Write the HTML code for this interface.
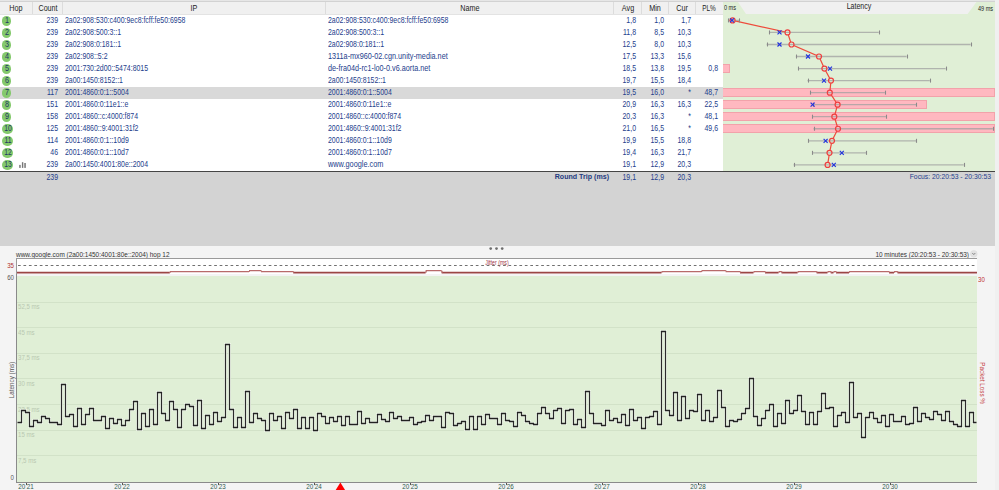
<!DOCTYPE html><html><head><meta charset="utf-8"><style>
html,body{margin:0;padding:0;}
body{width:999px;height:490px;position:relative;overflow:hidden;background:#f4f4f4;font-family:'Liberation Sans', sans-serif;}
.a{position:absolute;}
.tx{position:absolute;white-space:nowrap;color:#24408c;}
.hop{position:absolute;height:10px;border-radius:5px;background:#84c96c;}
</style></head><body>

<div class="a" style="left:995px;top:0;width:4px;height:490px;background:#f0f0f0"></div>
<div class="a" style="left:0;top:0;width:995px;height:1px;background:#e6e6e6"></div>
<div class="a" style="left:0;top:1px;width:995px;height:1px;background:#d2d2d2"></div>
<div class="a" style="left:0;top:2px;width:995px;height:12px;background:#f0f0f0"></div>
<div class="a" style="left:0;top:14px;width:723px;height:1px;background:#e3e3e3"></div>
<div class="a" style="left:0;top:15px;width:723px;height:156px;background:#fff"></div>
<div class="a" style="left:0;top:87px;width:723px;height:12px;background:#d9d9d9"></div>
<div class="a" style="left:32px;top:2px;width:1px;height:12px;background:#dcdcdc"></div>
<div class="a" style="left:62px;top:2px;width:1px;height:12px;background:#dcdcdc"></div>
<div class="a" style="left:325px;top:2px;width:1px;height:12px;background:#dcdcdc"></div>
<div class="a" style="left:613px;top:2px;width:1px;height:12px;background:#dcdcdc"></div>
<div class="a" style="left:641px;top:2px;width:1px;height:12px;background:#dcdcdc"></div>
<div class="a" style="left:668px;top:2px;width:1px;height:12px;background:#dcdcdc"></div>
<div class="a" style="left:695px;top:2px;width:1px;height:12px;background:#dcdcdc"></div>
<div class="tx" style="left:-184.0px;width:400px;text-align:center;transform-origin:50% 50%;top:1.6px;font-size:8.5px;line-height:12px;color:#1c1c1c;transform:scaleX(0.85);">Hop</div>
<div class="tx" style="left:-152.5px;width:400px;text-align:center;transform-origin:50% 50%;top:1.6px;font-size:8.5px;line-height:12px;color:#1c1c1c;transform:scaleX(0.84);">Count</div>
<div class="tx" style="left:-6.0px;width:400px;text-align:center;transform-origin:50% 50%;top:1.6px;font-size:8.5px;line-height:12px;color:#1c1c1c;transform:scaleX(0.85);">IP</div>
<div class="tx" style="left:269.5px;width:400px;text-align:center;transform-origin:50% 50%;top:1.6px;font-size:8.5px;line-height:12px;color:#1c1c1c;transform:scaleX(0.85);">Name</div>
<div class="tx" style="left:427.5px;width:400px;text-align:center;transform-origin:50% 50%;top:1.6px;font-size:8.5px;line-height:12px;color:#1c1c1c;transform:scaleX(0.85);">Avg</div>
<div class="tx" style="left:455.0px;width:400px;text-align:center;transform-origin:50% 50%;top:1.6px;font-size:8.5px;line-height:12px;color:#1c1c1c;transform:scaleX(0.85);">Min</div>
<div class="tx" style="left:482.0px;width:400px;text-align:center;transform-origin:50% 50%;top:1.6px;font-size:8.5px;line-height:12px;color:#1c1c1c;transform:scaleX(0.85);">Cur</div>
<div class="tx" style="left:509.0px;width:400px;text-align:center;transform-origin:50% 50%;top:1.6px;font-size:8.5px;line-height:12px;color:#1c1c1c;transform:scaleX(0.76);">PL%</div>
<div class="a" style="left:723px;top:2px;width:272px;height:169px;background:#e0efd6"></div>
<svg class="a" style="left:723px;top:0" width="272" height="16"><polygon points="15,2 253.5,2 244.6,14 23,14" fill="#f0f0f0"/></svg>
<div class="tx" style="left:724px;width:400px;text-align:left;transform-origin:0 50%;top:2px;font-size:7px;line-height:12px;color:#1c1c1c;transform:scaleX(0.79);">0 ms</div>
<div class="tx" style="left:659.2px;width:400px;text-align:center;transform-origin:50% 50%;top:0.2px;font-size:8.6px;line-height:12px;color:#1c1c1c;transform:scaleX(0.82);">Latency</div>
<div class="tx" style="left:592.8px;width:400px;text-align:right;transform-origin:100% 50%;top:3px;font-size:7px;line-height:12px;color:#1c1c1c;transform:scaleX(0.79);">49 ms</div>
<div class="hop" style="left:1.85px;top:15.9px;width:9.6px;height:9.9px"></div>
<div class="tx" style="left:-193.35px;width:400px;text-align:center;transform-origin:50% 50%;top:14.3px;font-size:8.5px;line-height:12px;color:#1f3566;transform:scaleX(0.85);">1</div>
<div class="tx" style="left:-342.2px;width:400px;text-align:right;transform-origin:100% 50%;top:14px;font-size:8.8px;line-height:12px;transform:scaleX(0.79);">239</div>
<div class="tx" style="left:64.8px;width:400px;text-align:left;transform-origin:0 50%;top:14px;font-size:8.8px;line-height:12px;transform:scaleX(0.79);">2a02:908:530:c400:9ec8:fcff:fe50:6958</div>
<div class="tx" style="left:328.3px;width:400px;text-align:left;transform-origin:0 50%;top:14px;font-size:8.8px;line-height:12px;transform:scaleX(0.79);">2a02:908:530:c400:9ec8:fcff:fe50:6958</div>
<div class="tx" style="left:236.20000000000005px;width:400px;text-align:right;transform-origin:100% 50%;top:14px;font-size:8.8px;line-height:12px;transform:scaleX(0.79);">1,8</div>
<div class="tx" style="left:263.70000000000005px;width:400px;text-align:right;transform-origin:100% 50%;top:14px;font-size:8.8px;line-height:12px;transform:scaleX(0.79);">1,0</div>
<div class="tx" style="left:290.70000000000005px;width:400px;text-align:right;transform-origin:100% 50%;top:14px;font-size:8.8px;line-height:12px;transform:scaleX(0.79);">1,7</div>
<div class="hop" style="left:1.85px;top:27.9px;width:9.6px;height:9.9px"></div>
<div class="tx" style="left:-193.35px;width:400px;text-align:center;transform-origin:50% 50%;top:26.3px;font-size:8.5px;line-height:12px;color:#1f3566;transform:scaleX(0.85);">2</div>
<div class="tx" style="left:-342.2px;width:400px;text-align:right;transform-origin:100% 50%;top:26px;font-size:8.8px;line-height:12px;transform:scaleX(0.79);">239</div>
<div class="tx" style="left:64.8px;width:400px;text-align:left;transform-origin:0 50%;top:26px;font-size:8.8px;line-height:12px;transform:scaleX(0.79);">2a02:908:500:3::1</div>
<div class="tx" style="left:328.3px;width:400px;text-align:left;transform-origin:0 50%;top:26px;font-size:8.8px;line-height:12px;transform:scaleX(0.79);">2a02:908:500:3::1</div>
<div class="tx" style="left:236.20000000000005px;width:400px;text-align:right;transform-origin:100% 50%;top:26px;font-size:8.8px;line-height:12px;transform:scaleX(0.79);">11,8</div>
<div class="tx" style="left:263.70000000000005px;width:400px;text-align:right;transform-origin:100% 50%;top:26px;font-size:8.8px;line-height:12px;transform:scaleX(0.79);">8,5</div>
<div class="tx" style="left:290.70000000000005px;width:400px;text-align:right;transform-origin:100% 50%;top:26px;font-size:8.8px;line-height:12px;transform:scaleX(0.79);">10,3</div>
<div class="hop" style="left:1.85px;top:39.9px;width:9.6px;height:9.9px"></div>
<div class="tx" style="left:-193.35px;width:400px;text-align:center;transform-origin:50% 50%;top:38.3px;font-size:8.5px;line-height:12px;color:#1f3566;transform:scaleX(0.85);">3</div>
<div class="tx" style="left:-342.2px;width:400px;text-align:right;transform-origin:100% 50%;top:38px;font-size:8.8px;line-height:12px;transform:scaleX(0.79);">239</div>
<div class="tx" style="left:64.8px;width:400px;text-align:left;transform-origin:0 50%;top:38px;font-size:8.8px;line-height:12px;transform:scaleX(0.79);">2a02:908:0:181::1</div>
<div class="tx" style="left:328.3px;width:400px;text-align:left;transform-origin:0 50%;top:38px;font-size:8.8px;line-height:12px;transform:scaleX(0.79);">2a02:908:0:181::1</div>
<div class="tx" style="left:236.20000000000005px;width:400px;text-align:right;transform-origin:100% 50%;top:38px;font-size:8.8px;line-height:12px;transform:scaleX(0.79);">12,5</div>
<div class="tx" style="left:263.70000000000005px;width:400px;text-align:right;transform-origin:100% 50%;top:38px;font-size:8.8px;line-height:12px;transform:scaleX(0.79);">8,0</div>
<div class="tx" style="left:290.70000000000005px;width:400px;text-align:right;transform-origin:100% 50%;top:38px;font-size:8.8px;line-height:12px;transform:scaleX(0.79);">10,3</div>
<div class="hop" style="left:1.85px;top:51.9px;width:9.6px;height:9.9px"></div>
<div class="tx" style="left:-193.35px;width:400px;text-align:center;transform-origin:50% 50%;top:50.3px;font-size:8.5px;line-height:12px;color:#1f3566;transform:scaleX(0.85);">4</div>
<div class="tx" style="left:-342.2px;width:400px;text-align:right;transform-origin:100% 50%;top:50px;font-size:8.8px;line-height:12px;transform:scaleX(0.79);">239</div>
<div class="tx" style="left:64.8px;width:400px;text-align:left;transform-origin:0 50%;top:50px;font-size:8.8px;line-height:12px;transform:scaleX(0.79);">2a02:908::5:2</div>
<div class="tx" style="left:328.3px;width:400px;text-align:left;transform-origin:0 50%;top:50px;font-size:8.8px;line-height:12px;transform:scaleX(0.825);">1311a-mx960-02.cgn.unity-media.net</div>
<div class="tx" style="left:236.20000000000005px;width:400px;text-align:right;transform-origin:100% 50%;top:50px;font-size:8.8px;line-height:12px;transform:scaleX(0.79);">17,5</div>
<div class="tx" style="left:263.70000000000005px;width:400px;text-align:right;transform-origin:100% 50%;top:50px;font-size:8.8px;line-height:12px;transform:scaleX(0.79);">13,3</div>
<div class="tx" style="left:290.70000000000005px;width:400px;text-align:right;transform-origin:100% 50%;top:50px;font-size:8.8px;line-height:12px;transform:scaleX(0.79);">15,6</div>
<div class="hop" style="left:1.85px;top:63.9px;width:9.6px;height:9.9px"></div>
<div class="tx" style="left:-193.35px;width:400px;text-align:center;transform-origin:50% 50%;top:62.3px;font-size:8.5px;line-height:12px;color:#1f3566;transform:scaleX(0.85);">5</div>
<div class="tx" style="left:-342.2px;width:400px;text-align:right;transform-origin:100% 50%;top:62px;font-size:8.8px;line-height:12px;transform:scaleX(0.79);">239</div>
<div class="tx" style="left:64.8px;width:400px;text-align:left;transform-origin:0 50%;top:62px;font-size:8.8px;line-height:12px;transform:scaleX(0.79);">2001:730:2d00::5474:8015</div>
<div class="tx" style="left:328.3px;width:400px;text-align:left;transform-origin:0 50%;top:62px;font-size:8.8px;line-height:12px;transform:scaleX(0.824);">de-fra04d-rc1-lo0-0.v6.aorta.net</div>
<div class="tx" style="left:236.20000000000005px;width:400px;text-align:right;transform-origin:100% 50%;top:62px;font-size:8.8px;line-height:12px;transform:scaleX(0.79);">18,5</div>
<div class="tx" style="left:263.70000000000005px;width:400px;text-align:right;transform-origin:100% 50%;top:62px;font-size:8.8px;line-height:12px;transform:scaleX(0.79);">13,8</div>
<div class="tx" style="left:290.70000000000005px;width:400px;text-align:right;transform-origin:100% 50%;top:62px;font-size:8.8px;line-height:12px;transform:scaleX(0.79);">19,5</div>
<div class="tx" style="left:318px;width:400px;text-align:right;transform-origin:100% 50%;top:62px;font-size:8.8px;line-height:12px;transform:scaleX(0.79);">0,8</div>
<div class="a" style="left:723px;top:64px;width:7.3px;height:9px;background:#ffb8c0;box-sizing:border-box;border:1px solid #f2a2aa;border-left:none"></div>
<div class="hop" style="left:1.85px;top:75.9px;width:9.6px;height:9.9px"></div>
<div class="tx" style="left:-193.35px;width:400px;text-align:center;transform-origin:50% 50%;top:74.3px;font-size:8.5px;line-height:12px;color:#1f3566;transform:scaleX(0.85);">6</div>
<div class="tx" style="left:-342.2px;width:400px;text-align:right;transform-origin:100% 50%;top:74px;font-size:8.8px;line-height:12px;transform:scaleX(0.79);">239</div>
<div class="tx" style="left:64.8px;width:400px;text-align:left;transform-origin:0 50%;top:74px;font-size:8.8px;line-height:12px;transform:scaleX(0.79);">2a00:1450:8152::1</div>
<div class="tx" style="left:328.3px;width:400px;text-align:left;transform-origin:0 50%;top:74px;font-size:8.8px;line-height:12px;transform:scaleX(0.79);">2a00:1450:8152::1</div>
<div class="tx" style="left:236.20000000000005px;width:400px;text-align:right;transform-origin:100% 50%;top:74px;font-size:8.8px;line-height:12px;transform:scaleX(0.79);">19,7</div>
<div class="tx" style="left:263.70000000000005px;width:400px;text-align:right;transform-origin:100% 50%;top:74px;font-size:8.8px;line-height:12px;transform:scaleX(0.79);">15,5</div>
<div class="tx" style="left:290.70000000000005px;width:400px;text-align:right;transform-origin:100% 50%;top:74px;font-size:8.8px;line-height:12px;transform:scaleX(0.79);">18,4</div>
<div class="hop" style="left:1.85px;top:87.9px;width:9.6px;height:9.9px"></div>
<div class="tx" style="left:-193.35px;width:400px;text-align:center;transform-origin:50% 50%;top:86.3px;font-size:8.5px;line-height:12px;color:#1f3566;transform:scaleX(0.85);">7</div>
<div class="tx" style="left:-342.2px;width:400px;text-align:right;transform-origin:100% 50%;top:86px;font-size:8.8px;line-height:12px;transform:scaleX(0.79);">117</div>
<div class="tx" style="left:64.8px;width:400px;text-align:left;transform-origin:0 50%;top:86px;font-size:8.8px;line-height:12px;transform:scaleX(0.79);">2001:4860:0:1::5004</div>
<div class="tx" style="left:328.3px;width:400px;text-align:left;transform-origin:0 50%;top:86px;font-size:8.8px;line-height:12px;transform:scaleX(0.79);">2001:4860:0:1::5004</div>
<div class="tx" style="left:236.20000000000005px;width:400px;text-align:right;transform-origin:100% 50%;top:86px;font-size:8.8px;line-height:12px;transform:scaleX(0.79);">19,5</div>
<div class="tx" style="left:263.70000000000005px;width:400px;text-align:right;transform-origin:100% 50%;top:86px;font-size:8.8px;line-height:12px;transform:scaleX(0.79);">16,0</div>
<div class="tx" style="left:290.70000000000005px;width:400px;text-align:right;transform-origin:100% 50%;top:86px;font-size:8.8px;line-height:12px;transform:scaleX(0.79);">*</div>
<div class="tx" style="left:318px;width:400px;text-align:right;transform-origin:100% 50%;top:86px;font-size:8.8px;line-height:12px;transform:scaleX(0.79);">48,7</div>
<div class="a" style="left:723px;top:88px;width:272.0px;height:9px;background:#ffb8c0;box-sizing:border-box;border:1px solid #f2a2aa;border-left:none"></div>
<div class="hop" style="left:1.85px;top:99.9px;width:9.6px;height:9.9px"></div>
<div class="tx" style="left:-193.35px;width:400px;text-align:center;transform-origin:50% 50%;top:98.3px;font-size:8.5px;line-height:12px;color:#1f3566;transform:scaleX(0.85);">8</div>
<div class="tx" style="left:-342.2px;width:400px;text-align:right;transform-origin:100% 50%;top:98px;font-size:8.8px;line-height:12px;transform:scaleX(0.79);">151</div>
<div class="tx" style="left:64.8px;width:400px;text-align:left;transform-origin:0 50%;top:98px;font-size:8.8px;line-height:12px;transform:scaleX(0.79);">2001:4860:0:11e1::e</div>
<div class="tx" style="left:328.3px;width:400px;text-align:left;transform-origin:0 50%;top:98px;font-size:8.8px;line-height:12px;transform:scaleX(0.79);">2001:4860:0:11e1::e</div>
<div class="tx" style="left:236.20000000000005px;width:400px;text-align:right;transform-origin:100% 50%;top:98px;font-size:8.8px;line-height:12px;transform:scaleX(0.79);">20,9</div>
<div class="tx" style="left:263.70000000000005px;width:400px;text-align:right;transform-origin:100% 50%;top:98px;font-size:8.8px;line-height:12px;transform:scaleX(0.79);">16,3</div>
<div class="tx" style="left:290.70000000000005px;width:400px;text-align:right;transform-origin:100% 50%;top:98px;font-size:8.8px;line-height:12px;transform:scaleX(0.79);">16,3</div>
<div class="tx" style="left:318px;width:400px;text-align:right;transform-origin:100% 50%;top:98px;font-size:8.8px;line-height:12px;transform:scaleX(0.79);">22,5</div>
<div class="a" style="left:723px;top:100px;width:204.0px;height:9px;background:#ffb8c0;box-sizing:border-box;border:1px solid #f2a2aa;border-left:none"></div>
<div class="hop" style="left:1.85px;top:111.9px;width:9.6px;height:9.9px"></div>
<div class="tx" style="left:-193.35px;width:400px;text-align:center;transform-origin:50% 50%;top:110.3px;font-size:8.5px;line-height:12px;color:#1f3566;transform:scaleX(0.85);">9</div>
<div class="tx" style="left:-342.2px;width:400px;text-align:right;transform-origin:100% 50%;top:110px;font-size:8.8px;line-height:12px;transform:scaleX(0.79);">158</div>
<div class="tx" style="left:64.8px;width:400px;text-align:left;transform-origin:0 50%;top:110px;font-size:8.8px;line-height:12px;transform:scaleX(0.79);">2001:4860::c:4000:f874</div>
<div class="tx" style="left:328.3px;width:400px;text-align:left;transform-origin:0 50%;top:110px;font-size:8.8px;line-height:12px;transform:scaleX(0.79);">2001:4860::c:4000:f874</div>
<div class="tx" style="left:236.20000000000005px;width:400px;text-align:right;transform-origin:100% 50%;top:110px;font-size:8.8px;line-height:12px;transform:scaleX(0.79);">20,3</div>
<div class="tx" style="left:263.70000000000005px;width:400px;text-align:right;transform-origin:100% 50%;top:110px;font-size:8.8px;line-height:12px;transform:scaleX(0.79);">16,3</div>
<div class="tx" style="left:290.70000000000005px;width:400px;text-align:right;transform-origin:100% 50%;top:110px;font-size:8.8px;line-height:12px;transform:scaleX(0.79);">*</div>
<div class="tx" style="left:318px;width:400px;text-align:right;transform-origin:100% 50%;top:110px;font-size:8.8px;line-height:12px;transform:scaleX(0.79);">48,1</div>
<div class="a" style="left:723px;top:112px;width:272.0px;height:9px;background:#ffb8c0;box-sizing:border-box;border:1px solid #f2a2aa;border-left:none"></div>
<div class="hop" style="left:1.85px;top:123.9px;width:11.3px;height:9.9px"></div>
<div class="tx" style="left:-192.5px;width:400px;text-align:center;transform-origin:50% 50%;top:122.3px;font-size:8.5px;line-height:12px;color:#1f3566;transform:scaleX(0.8);">10</div>
<div class="tx" style="left:-342.2px;width:400px;text-align:right;transform-origin:100% 50%;top:122px;font-size:8.8px;line-height:12px;transform:scaleX(0.79);">125</div>
<div class="tx" style="left:64.8px;width:400px;text-align:left;transform-origin:0 50%;top:122px;font-size:8.8px;line-height:12px;transform:scaleX(0.79);">2001:4860::9:4001:31f2</div>
<div class="tx" style="left:328.3px;width:400px;text-align:left;transform-origin:0 50%;top:122px;font-size:8.8px;line-height:12px;transform:scaleX(0.79);">2001:4860::9:4001:31f2</div>
<div class="tx" style="left:236.20000000000005px;width:400px;text-align:right;transform-origin:100% 50%;top:122px;font-size:8.8px;line-height:12px;transform:scaleX(0.79);">21,0</div>
<div class="tx" style="left:263.70000000000005px;width:400px;text-align:right;transform-origin:100% 50%;top:122px;font-size:8.8px;line-height:12px;transform:scaleX(0.79);">16,5</div>
<div class="tx" style="left:290.70000000000005px;width:400px;text-align:right;transform-origin:100% 50%;top:122px;font-size:8.8px;line-height:12px;transform:scaleX(0.79);">*</div>
<div class="tx" style="left:318px;width:400px;text-align:right;transform-origin:100% 50%;top:122px;font-size:8.8px;line-height:12px;transform:scaleX(0.79);">49,6</div>
<div class="a" style="left:723px;top:124px;width:272.0px;height:9px;background:#ffb8c0;box-sizing:border-box;border:1px solid #f2a2aa;border-left:none"></div>
<div class="hop" style="left:1.85px;top:135.9px;width:11.3px;height:9.9px"></div>
<div class="tx" style="left:-192.5px;width:400px;text-align:center;transform-origin:50% 50%;top:134.3px;font-size:8.5px;line-height:12px;color:#1f3566;transform:scaleX(0.8);">11</div>
<div class="tx" style="left:-342.2px;width:400px;text-align:right;transform-origin:100% 50%;top:134px;font-size:8.8px;line-height:12px;transform:scaleX(0.79);">114</div>
<div class="tx" style="left:64.8px;width:400px;text-align:left;transform-origin:0 50%;top:134px;font-size:8.8px;line-height:12px;transform:scaleX(0.79);">2001:4860:0:1::10d9</div>
<div class="tx" style="left:328.3px;width:400px;text-align:left;transform-origin:0 50%;top:134px;font-size:8.8px;line-height:12px;transform:scaleX(0.79);">2001:4860:0:1::10d9</div>
<div class="tx" style="left:236.20000000000005px;width:400px;text-align:right;transform-origin:100% 50%;top:134px;font-size:8.8px;line-height:12px;transform:scaleX(0.79);">19,9</div>
<div class="tx" style="left:263.70000000000005px;width:400px;text-align:right;transform-origin:100% 50%;top:134px;font-size:8.8px;line-height:12px;transform:scaleX(0.79);">15,5</div>
<div class="tx" style="left:290.70000000000005px;width:400px;text-align:right;transform-origin:100% 50%;top:134px;font-size:8.8px;line-height:12px;transform:scaleX(0.79);">18,8</div>
<div class="hop" style="left:1.85px;top:147.9px;width:11.3px;height:9.9px"></div>
<div class="tx" style="left:-192.5px;width:400px;text-align:center;transform-origin:50% 50%;top:146.3px;font-size:8.5px;line-height:12px;color:#1f3566;transform:scaleX(0.8);">12</div>
<div class="tx" style="left:-342.2px;width:400px;text-align:right;transform-origin:100% 50%;top:146px;font-size:8.8px;line-height:12px;transform:scaleX(0.79);">46</div>
<div class="tx" style="left:64.8px;width:400px;text-align:left;transform-origin:0 50%;top:146px;font-size:8.8px;line-height:12px;transform:scaleX(0.79);">2001:4860:0:1::10d7</div>
<div class="tx" style="left:328.3px;width:400px;text-align:left;transform-origin:0 50%;top:146px;font-size:8.8px;line-height:12px;transform:scaleX(0.79);">2001:4860:0:1::10d7</div>
<div class="tx" style="left:236.20000000000005px;width:400px;text-align:right;transform-origin:100% 50%;top:146px;font-size:8.8px;line-height:12px;transform:scaleX(0.79);">19,4</div>
<div class="tx" style="left:263.70000000000005px;width:400px;text-align:right;transform-origin:100% 50%;top:146px;font-size:8.8px;line-height:12px;transform:scaleX(0.79);">16,3</div>
<div class="tx" style="left:290.70000000000005px;width:400px;text-align:right;transform-origin:100% 50%;top:146px;font-size:8.8px;line-height:12px;transform:scaleX(0.79);">21,7</div>
<div class="hop" style="left:1.85px;top:159.9px;width:11.3px;height:9.9px"></div>
<div class="tx" style="left:-192.5px;width:400px;text-align:center;transform-origin:50% 50%;top:158.3px;font-size:8.5px;line-height:12px;color:#1f3566;transform:scaleX(0.8);">13</div>
<div class="tx" style="left:-342.2px;width:400px;text-align:right;transform-origin:100% 50%;top:158px;font-size:8.8px;line-height:12px;transform:scaleX(0.79);">239</div>
<div class="tx" style="left:64.8px;width:400px;text-align:left;transform-origin:0 50%;top:158px;font-size:8.8px;line-height:12px;transform:scaleX(0.79);">2a00:1450:4001:80e::2004</div>
<div class="tx" style="left:328.3px;width:400px;text-align:left;transform-origin:0 50%;top:158px;font-size:8.8px;line-height:12px;transform:scaleX(0.834);">www.google.com</div>
<div class="tx" style="left:236.20000000000005px;width:400px;text-align:right;transform-origin:100% 50%;top:158px;font-size:8.8px;line-height:12px;transform:scaleX(0.79);">19,1</div>
<div class="tx" style="left:263.70000000000005px;width:400px;text-align:right;transform-origin:100% 50%;top:158px;font-size:8.8px;line-height:12px;transform:scaleX(0.79);">12,9</div>
<div class="tx" style="left:290.70000000000005px;width:400px;text-align:right;transform-origin:100% 50%;top:158px;font-size:8.8px;line-height:12px;transform:scaleX(0.79);">20,3</div>
<svg class="a" style="left:19px;top:162px" width="8" height="7"><rect x="0.2" y="2.9" width="1.5" height="3" fill="#777"/><rect x="2.9" y="0.2" width="1.4" height="5.7" fill="#777"/><rect x="5.3" y="1" width="1.5" height="4.9" fill="#777"/></svg>
<svg class="a" style="left:0;top:0" width="999" height="175"><polyline points="732.6,20.4 787.5,32.44 791.5,44.48 819.0,56.519999999999996 824.4,68.56 831.0,80.6 829.8,92.63999999999999 837.6,104.68 834.3,116.72 838.0,128.76 832.0,140.79999999999998 829.5,152.84 827.6,164.88" fill="none" stroke="#ee4b3c" stroke-width="1.2"/><circle cx="732.6" cy="20.4" r="2.6" fill="#e0efd6"/><circle cx="787.5" cy="32.44" r="2.6" fill="#e0efd6"/><circle cx="791.5" cy="44.48" r="2.6" fill="#e0efd6"/><circle cx="819.0" cy="56.519999999999996" r="2.6" fill="#e0efd6"/><circle cx="824.4" cy="68.56" r="2.6" fill="#e0efd6"/><circle cx="831.0" cy="80.6" r="2.6" fill="#e0efd6"/><circle cx="829.8" cy="92.63999999999999" r="2.6" fill="#ffb8c0"/><circle cx="837.6" cy="104.68" r="2.6" fill="#ffb8c0"/><circle cx="834.3" cy="116.72" r="2.6" fill="#ffb8c0"/><circle cx="838.0" cy="128.76" r="2.6" fill="#ffb8c0"/><circle cx="832.0" cy="140.79999999999998" r="2.6" fill="#e0efd6"/><circle cx="829.5" cy="152.84" r="2.6" fill="#e0efd6"/><circle cx="827.6" cy="164.88" r="2.6" fill="#e0efd6"/><line x1="728.5" y1="20.4" x2="739.3" y2="20.4" stroke="#a0a0a0" stroke-width="1.3" stroke-opacity="0.75"/><line x1="728.5" y1="18.4" x2="728.5" y2="22.4" stroke="#8a8a8a" stroke-width="1.1"/><line x1="739.5" y1="18.4" x2="739.5" y2="22.4" stroke="#8a8a8a" stroke-width="1.1"/><line x1="769.4" y1="32.44" x2="878.7" y2="32.44" stroke="#a0a0a0" stroke-width="1.3" stroke-opacity="0.75"/><line x1="769.5" y1="30.439999999999998" x2="769.5" y2="34.44" stroke="#8a8a8a" stroke-width="1.1"/><line x1="879.5" y1="30.439999999999998" x2="879.5" y2="34.44" stroke="#8a8a8a" stroke-width="1.1"/><line x1="766.7" y1="44.48" x2="970.6" y2="44.48" stroke="#a0a0a0" stroke-width="1.3" stroke-opacity="0.75"/><line x1="767.5" y1="42.48" x2="767.5" y2="46.48" stroke="#8a8a8a" stroke-width="1.1"/><line x1="971.5" y1="42.48" x2="971.5" y2="46.48" stroke="#8a8a8a" stroke-width="1.1"/><line x1="795.9" y1="56.519999999999996" x2="906.6" y2="56.519999999999996" stroke="#a0a0a0" stroke-width="1.3" stroke-opacity="0.75"/><line x1="796.5" y1="54.519999999999996" x2="796.5" y2="58.519999999999996" stroke="#8a8a8a" stroke-width="1.1"/><line x1="907.5" y1="54.519999999999996" x2="907.5" y2="58.519999999999996" stroke="#8a8a8a" stroke-width="1.1"/><line x1="798.5" y1="68.56" x2="945.6" y2="68.56" stroke="#a0a0a0" stroke-width="1.3" stroke-opacity="0.75"/><line x1="798.5" y1="66.56" x2="798.5" y2="70.56" stroke="#8a8a8a" stroke-width="1.1"/><line x1="946.5" y1="66.56" x2="946.5" y2="70.56" stroke="#8a8a8a" stroke-width="1.1"/><line x1="807.5" y1="80.6" x2="929.8" y2="80.6" stroke="#a0a0a0" stroke-width="1.3" stroke-opacity="0.75"/><line x1="808.5" y1="78.6" x2="808.5" y2="82.6" stroke="#8a8a8a" stroke-width="1.1"/><line x1="930.5" y1="78.6" x2="930.5" y2="82.6" stroke="#8a8a8a" stroke-width="1.1"/><line x1="810.4" y1="92.63999999999999" x2="884.8" y2="92.63999999999999" stroke="#a0a0a0" stroke-width="1.3" stroke-opacity="0.75"/><line x1="810.5" y1="90.63999999999999" x2="810.5" y2="94.63999999999999" stroke="#8a8a8a" stroke-width="1.1"/><line x1="885.5" y1="90.63999999999999" x2="885.5" y2="94.63999999999999" stroke="#8a8a8a" stroke-width="1.1"/><line x1="812.6" y1="104.68" x2="916.5" y2="104.68" stroke="#a0a0a0" stroke-width="1.3" stroke-opacity="0.75"/><line x1="813.5" y1="102.68" x2="813.5" y2="106.68" stroke="#8a8a8a" stroke-width="1.1"/><line x1="916.5" y1="102.68" x2="916.5" y2="106.68" stroke="#8a8a8a" stroke-width="1.1"/><line x1="812.3" y1="116.72" x2="885.9" y2="116.72" stroke="#a0a0a0" stroke-width="1.3" stroke-opacity="0.75"/><line x1="812.5" y1="114.72" x2="812.5" y2="118.72" stroke="#8a8a8a" stroke-width="1.1"/><line x1="886.5" y1="114.72" x2="886.5" y2="118.72" stroke="#8a8a8a" stroke-width="1.1"/><line x1="813.5" y1="128.76" x2="992.8" y2="128.76" stroke="#a0a0a0" stroke-width="1.3" stroke-opacity="0.75"/><line x1="814.5" y1="126.75999999999999" x2="814.5" y2="130.76" stroke="#8a8a8a" stroke-width="1.1"/><line x1="993.5" y1="126.75999999999999" x2="993.5" y2="130.76" stroke="#8a8a8a" stroke-width="1.1"/><line x1="808.0" y1="140.79999999999998" x2="916.4" y2="140.79999999999998" stroke="#a0a0a0" stroke-width="1.3" stroke-opacity="0.75"/><line x1="808.5" y1="138.79999999999998" x2="808.5" y2="142.79999999999998" stroke="#8a8a8a" stroke-width="1.1"/><line x1="916.5" y1="138.79999999999998" x2="916.5" y2="142.79999999999998" stroke="#8a8a8a" stroke-width="1.1"/><line x1="812.0" y1="152.84" x2="866.4" y2="152.84" stroke="#a0a0a0" stroke-width="1.3" stroke-opacity="0.75"/><line x1="812.5" y1="150.84" x2="812.5" y2="154.84" stroke="#8a8a8a" stroke-width="1.1"/><line x1="866.5" y1="150.84" x2="866.5" y2="154.84" stroke="#8a8a8a" stroke-width="1.1"/><line x1="793.6" y1="164.88" x2="963.7" y2="164.88" stroke="#a0a0a0" stroke-width="1.3" stroke-opacity="0.75"/><line x1="794.5" y1="162.88" x2="794.5" y2="166.88" stroke="#8a8a8a" stroke-width="1.1"/><line x1="964.5" y1="162.88" x2="964.5" y2="166.88" stroke="#8a8a8a" stroke-width="1.1"/><circle cx="732.6" cy="20.4" r="2.5" fill="none" stroke="#ee3f3f" stroke-width="1.2"/><path d="M730.0,18.4L734.0,22.4M730.0,22.4L734.0,18.4" stroke="#2233dd" stroke-width="1.15"/><circle cx="787.5" cy="32.44" r="2.5" fill="none" stroke="#ee3f3f" stroke-width="1.2"/><path d="M777.5,30.439999999999998L781.5,34.44M777.5,34.44L781.5,30.439999999999998" stroke="#2233dd" stroke-width="1.15"/><circle cx="791.5" cy="44.48" r="2.5" fill="none" stroke="#ee3f3f" stroke-width="1.2"/><path d="M777.5,42.48L781.5,46.48M777.5,46.48L781.5,42.48" stroke="#2233dd" stroke-width="1.15"/><circle cx="819.0" cy="56.519999999999996" r="2.5" fill="none" stroke="#ee3f3f" stroke-width="1.2"/><path d="M806.0,54.519999999999996L810.0,58.519999999999996M806.0,58.519999999999996L810.0,54.519999999999996" stroke="#2233dd" stroke-width="1.15"/><circle cx="824.4" cy="68.56" r="2.5" fill="none" stroke="#ee3f3f" stroke-width="1.2"/><path d="M828.0,66.56L832.0,70.56M828.0,70.56L832.0,66.56" stroke="#2233dd" stroke-width="1.15"/><circle cx="831.0" cy="80.6" r="2.5" fill="none" stroke="#ee3f3f" stroke-width="1.2"/><path d="M822.0,78.6L826.0,82.6M822.0,82.6L826.0,78.6" stroke="#2233dd" stroke-width="1.15"/><circle cx="829.8" cy="92.63999999999999" r="2.5" fill="none" stroke="#ee3f3f" stroke-width="1.2"/><circle cx="837.6" cy="104.68" r="2.5" fill="none" stroke="#ee3f3f" stroke-width="1.2"/><path d="M810.6,102.68L814.6,106.68M810.6,106.68L814.6,102.68" stroke="#2233dd" stroke-width="1.15"/><circle cx="834.3" cy="116.72" r="2.5" fill="none" stroke="#ee3f3f" stroke-width="1.2"/><circle cx="838.0" cy="128.76" r="2.5" fill="none" stroke="#ee3f3f" stroke-width="1.2"/><circle cx="832.0" cy="140.79999999999998" r="2.5" fill="none" stroke="#ee3f3f" stroke-width="1.2"/><path d="M823.6,138.79999999999998L827.6,142.79999999999998M823.6,142.79999999999998L827.6,138.79999999999998" stroke="#2233dd" stroke-width="1.15"/><circle cx="829.5" cy="152.84" r="2.5" fill="none" stroke="#ee3f3f" stroke-width="1.2"/><path d="M839.8,150.84L843.8,154.84M839.8,154.84L843.8,150.84" stroke="#2233dd" stroke-width="1.15"/><circle cx="827.6" cy="164.88" r="2.5" fill="none" stroke="#ee3f3f" stroke-width="1.2"/><path d="M831.8,162.88L835.8,166.88M831.8,166.88L835.8,162.88" stroke="#2233dd" stroke-width="1.15"/></svg>
<div class="a" style="left:0;top:171px;width:995px;height:1px;background:#454545"></div>
<div class="a" style="left:0;top:172px;width:995px;height:74px;background:#d3d3d3"></div>
<div class="tx" style="left:-342.2px;width:400px;text-align:right;transform-origin:100% 50%;top:170.6px;font-size:8.8px;line-height:12px;transform:scaleX(0.79);">239</div>
<div class="tx" style="left:208.5px;width:400px;text-align:right;transform-origin:100% 50%;top:170.6px;font-size:8px;line-height:12px;color:#233a80;transform:scaleX(0.885);font-weight:bold;">Round Trip (ms)</div>
<div class="tx" style="left:236.20000000000005px;width:400px;text-align:right;transform-origin:100% 50%;top:170.6px;font-size:8.8px;line-height:12px;transform:scaleX(0.79);">19,1</div>
<div class="tx" style="left:263.70000000000005px;width:400px;text-align:right;transform-origin:100% 50%;top:170.6px;font-size:8.8px;line-height:12px;transform:scaleX(0.79);">12,9</div>
<div class="tx" style="left:290.70000000000005px;width:400px;text-align:right;transform-origin:100% 50%;top:170.6px;font-size:8.8px;line-height:12px;transform:scaleX(0.79);">20,3</div>
<div class="tx" style="left:590.5px;width:400px;text-align:right;transform-origin:100% 50%;top:170.6px;font-size:8px;line-height:12px;transform:scaleX(0.85);">Focus: 20:20:53 - 20:30:53</div>
<svg class="a" style="left:486px;top:244px" width="20" height="9"><circle cx="4.7" cy="4.6" r="1.35" fill="#6e6e6e"/><circle cx="10.5" cy="4.6" r="1.35" fill="#6e6e6e"/><circle cx="16.2" cy="4.6" r="1.35" fill="#6e6e6e"/></svg>
<div class="tx" style="left:16px;width:400px;text-align:left;transform-origin:0 50%;top:248.5px;font-size:7.5px;line-height:12px;color:#333;transform:scaleX(0.86);">www.google.com (2a00:1450:4001:80e::2004) hop 12</div>
<div class="tx" style="left:568.7px;width:400px;text-align:right;transform-origin:100% 50%;top:248.5px;font-size:7.5px;line-height:12px;color:#333;transform:scaleX(0.86);">10 minutes (20:20:53 - 20:30:53)</div>
<svg class="a" style="left:969px;top:249px" width="12" height="12"><circle cx="4.8" cy="4.8" r="3.4" fill="#e2e2e2" stroke="#dadada" stroke-width="0.5"/><path d="M3.3,4.0L4.8,5.6L6.3,4.0" fill="none" stroke="#7a7a7a" stroke-width="0.9"/></svg>
<div class="a" style="left:16px;top:258px;width:961px;height:1px;background:#9a9a9a"></div>
<div class="a" style="left:16px;top:259px;width:961px;height:15px;background:#fff"></div>
<div class="a" style="left:16px;top:258px;width:1px;height:16px;background:#9a9a9a"></div>
<svg class="a" style="left:0;top:255px" width="999" height="22"><line x1="18" y1="10.5" x2="977" y2="10.5" stroke="#707070" stroke-width="1" stroke-dasharray="2.7,2.75"/><path d="M17,17.7L169.8,17.7M293.2,17.7L425.6,17.7M441.6,17.7L661.5,17.7M740,17.7L753.5,17.7M765,17.7L778.6,17.7M781.5,17.7L797.6,17.7M816.6,17.7L827.5,17.7M830.7,17.7L833.5,17.7M836,17.7L849,17.7M889,17.7L894,17.7M897.5,17.7L977,17.7" fill="none" stroke="#9b4545" stroke-width="1.75"/><path d="M169.8,16.7L249,16.7M249,15.7L261,15.7M261,16.7L293.2,16.7M425.6,15.7L441.6,15.7M661.5,16.7L701.5,16.7M701.5,15.7L725.6,15.7M725.6,16.7L740,16.7M753.5,16.7L765,16.7M778.6,16.7L781.5,16.7M797.6,16.7L816.6,16.7M827.5,16.7L830.7,16.7M833.5,16.7L836,16.7M849,16.7L889,16.7M894,16.7L897.5,16.7M169.8,17.7L170.60000000000002,16.7M249,16.7L249.8,15.7M261,15.7L261.8,16.7M293.2,16.7L294.0,17.7M425.6,17.7L426.40000000000003,15.7M441.6,15.7L442.40000000000003,17.7M661.5,17.7L662.3,16.7M701.5,16.7L702.3,15.7M725.6,15.7L726.4,16.7M740,16.7L740.8,17.7M753.5,17.7L754.3,16.7M765,16.7L765.8,17.7M778.6,17.7L779.4,16.7M781.5,16.7L782.3,17.7M797.6,17.7L798.4,16.7M816.6,16.7L817.4,17.7M827.5,17.7L828.3,16.7M830.7,16.7L831.5,17.7M833.5,17.7L834.3,16.7M836,16.7L836.8,17.7M849,17.7L849.8,16.7M889,16.7L889.8,17.7M894,17.7L894.8,16.7M897.5,16.7L898.3,17.7" fill="none" stroke="#b86a6a" stroke-width="1.3"/></svg>
<div class="tx" style="left:-386px;width:400px;text-align:right;transform-origin:100% 50%;top:259.5px;font-size:7px;line-height:12px;color:#b03030;transform:scaleX(0.87);">35</div>
<div class="tx" style="left:296.5px;width:400px;text-align:center;transform-origin:50% 50%;top:257.2px;font-size:7px;line-height:12px;color:#a03545;transform:scaleX(0.75);">Jitter (ms)</div>
<div class="a" style="left:17px;top:276px;width:960px;height:206px;background:#e0efd6"></div>
<div class="a" style="left:16px;top:274px;width:1px;height:209px;background:#8a8a8a"></div>
<div class="a" style="left:16px;top:482px;width:961px;height:1px;background:#8a8a8a"></div>
<div class="a" style="left:17px;top:302px;width:960px;height:1px;background:#d2e2c8"></div>
<div class="tx" style="left:17.5px;width:400px;text-align:left;transform-origin:0 50%;top:300.5px;font-size:7px;line-height:12px;color:#b9c8b1;transform:scaleX(0.87);">52,5 ms</div>
<div class="a" style="left:17px;top:327px;width:960px;height:1px;background:#d2e2c8"></div>
<div class="tx" style="left:17.5px;width:400px;text-align:left;transform-origin:0 50%;top:326.5px;font-size:7px;line-height:12px;color:#b9c8b1;transform:scaleX(0.87);">45 ms</div>
<div class="a" style="left:17px;top:353px;width:960px;height:1px;background:#d2e2c8"></div>
<div class="tx" style="left:17.5px;width:400px;text-align:left;transform-origin:0 50%;top:351.5px;font-size:7px;line-height:12px;color:#b9c8b1;transform:scaleX(0.87);">37,5 ms</div>
<div class="a" style="left:17px;top:378px;width:960px;height:1px;background:#d2e2c8"></div>
<div class="tx" style="left:17.5px;width:400px;text-align:left;transform-origin:0 50%;top:377.5px;font-size:7px;line-height:12px;color:#b9c8b1;transform:scaleX(0.87);">30 ms</div>
<div class="a" style="left:17px;top:404px;width:960px;height:1px;background:#d2e2c8"></div>
<div class="tx" style="left:17.5px;width:400px;text-align:left;transform-origin:0 50%;top:403.5px;font-size:7px;line-height:12px;color:#b9c8b1;transform:scaleX(0.87);">22,5 ms</div>
<div class="a" style="left:17px;top:430px;width:960px;height:1px;background:#d2e2c8"></div>
<div class="tx" style="left:17.5px;width:400px;text-align:left;transform-origin:0 50%;top:428.5px;font-size:7px;line-height:12px;color:#b9c8b1;transform:scaleX(0.87);">15 ms</div>
<div class="a" style="left:17px;top:455px;width:960px;height:1px;background:#d2e2c8"></div>
<div class="tx" style="left:17.5px;width:400px;text-align:left;transform-origin:0 50%;top:454.5px;font-size:7px;line-height:12px;color:#b9c8b1;transform:scaleX(0.87);">7,5 ms</div>
<div class="tx" style="left:-386px;width:400px;text-align:right;transform-origin:100% 50%;top:272px;font-size:7px;line-height:12px;color:#555;transform:scaleX(0.87);">60</div>
<div class="tx" style="left:-386px;width:400px;text-align:right;transform-origin:100% 50%;top:472px;font-size:7px;line-height:12px;color:#555;transform:scaleX(0.87);">0</div>
<div class="tx" style="left:978px;width:400px;text-align:left;transform-origin:0 50%;top:274px;font-size:7px;line-height:12px;color:#c03030;transform:scaleX(0.87);">30</div>
<div class="tx" style="left:-10px;top:374px;width:44px;text-align:center;font-size:7px;line-height:12px;color:#555;transform:rotate(-90deg) scaleX(0.9)">Latency (ms)</div>
<div class="tx" style="left:959px;top:377px;width:46px;text-align:center;font-size:7px;line-height:12px;color:#c43a3a;transform:rotate(90deg) scaleX(0.9)">Packet Loss %</div>
<div class="tx" style="left:-174.4px;width:400px;text-align:center;transform-origin:50% 50%;top:480.5px;font-size:7.2px;line-height:12px;color:#2f5a4c;transform:scaleX(0.87);">20<span style="color:#cfd8d4">:</span>21</div>
<div class="a" style="left:25.6px;top:483px;width:1px;height:2px;background:#555"></div>
<div class="tx" style="left:-78.4px;width:400px;text-align:center;transform-origin:50% 50%;top:480.5px;font-size:7.2px;line-height:12px;color:#2f5a4c;transform:scaleX(0.87);">20<span style="color:#cfd8d4">:</span>22</div>
<div class="a" style="left:121.6px;top:483px;width:1px;height:2px;background:#555"></div>
<div class="tx" style="left:17.599999999999994px;width:400px;text-align:center;transform-origin:50% 50%;top:480.5px;font-size:7.2px;line-height:12px;color:#2f5a4c;transform:scaleX(0.87);">20<span style="color:#cfd8d4">:</span>23</div>
<div class="a" style="left:217.6px;top:483px;width:1px;height:2px;background:#555"></div>
<div class="tx" style="left:113.60000000000002px;width:400px;text-align:center;transform-origin:50% 50%;top:480.5px;font-size:7.2px;line-height:12px;color:#2f5a4c;transform:scaleX(0.87);">20<span style="color:#cfd8d4">:</span>24</div>
<div class="a" style="left:313.6px;top:483px;width:1px;height:2px;background:#555"></div>
<div class="tx" style="left:209.60000000000002px;width:400px;text-align:center;transform-origin:50% 50%;top:480.5px;font-size:7.2px;line-height:12px;color:#2f5a4c;transform:scaleX(0.87);">20<span style="color:#cfd8d4">:</span>25</div>
<div class="a" style="left:409.6px;top:483px;width:1px;height:2px;background:#555"></div>
<div class="tx" style="left:305.6px;width:400px;text-align:center;transform-origin:50% 50%;top:480.5px;font-size:7.2px;line-height:12px;color:#2f5a4c;transform:scaleX(0.87);">20<span style="color:#cfd8d4">:</span>26</div>
<div class="a" style="left:505.6px;top:483px;width:1px;height:2px;background:#555"></div>
<div class="tx" style="left:401.6px;width:400px;text-align:center;transform-origin:50% 50%;top:480.5px;font-size:7.2px;line-height:12px;color:#2f5a4c;transform:scaleX(0.87);">20<span style="color:#cfd8d4">:</span>27</div>
<div class="a" style="left:601.6px;top:483px;width:1px;height:2px;background:#555"></div>
<div class="tx" style="left:497.6px;width:400px;text-align:center;transform-origin:50% 50%;top:480.5px;font-size:7.2px;line-height:12px;color:#2f5a4c;transform:scaleX(0.87);">20<span style="color:#cfd8d4">:</span>28</div>
<div class="a" style="left:697.6px;top:483px;width:1px;height:2px;background:#555"></div>
<div class="tx" style="left:593.6px;width:400px;text-align:center;transform-origin:50% 50%;top:480.5px;font-size:7.2px;line-height:12px;color:#2f5a4c;transform:scaleX(0.87);">20<span style="color:#cfd8d4">:</span>29</div>
<div class="a" style="left:793.6px;top:483px;width:1px;height:2px;background:#555"></div>
<div class="tx" style="left:689.6px;width:400px;text-align:center;transform-origin:50% 50%;top:480.5px;font-size:7.2px;line-height:12px;color:#2f5a4c;transform:scaleX(0.87);">20<span style="color:#cfd8d4">:</span>30</div>
<div class="a" style="left:889.6px;top:483px;width:1px;height:2px;background:#555"></div>
<svg class="a" style="left:334px;top:482px" width="14" height="8"><polygon points="6.4,0.5 11.1,8 1.7,8" fill="#ff0000"/></svg>
<svg class="a" style="left:0;top:0" width="999" height="490"><path d="M17.5,422.5H21.5V410.5H25.5V412.5H29.5V426.5H33.5V420.5H37.5V422.5H41.5V416.5H45.5V418.5H49.5V422.5H53.5V422.5H57.5V424.5H61.5V384.5H65.5V416.5H69.5V414.5H73.5V426.5H77.5V408.5H81.5V424.5H85.5V414.5H89.5V408.5H93.5V420.5H97.5V420.5H101.5V416.5H105.5V428.5H109.5V418.5H113.5V423.5H117.5V419.5H121.5V425.5H125.5V420.5H129.5V409.5H133.5V401.5H137.5V429.5H141.5V413.5H145.5V426.5H149.5V409.5H153.5V424.5H157.5V392.5H161.5V413.5H165.5V420.5H169.5V401.5H173.5V409.5H177.5V427.5H181.5V409.5H185.5V404.5H189.5V406.5H193.5V425.5H197.5V400.5H201.5V428.5H205.5V415.5H209.5V424.5H213.5V412.5H217.5V421.5H221.5V417.5H225.5V344.5H229.5V409.5H233.5V427.5H237.5V417.5H241.5V427.5H245.5V391.5H249.5V422.5H253.5V413.5H257.5V418.5H261.5V420.5H265.5V430.5H269.5V413.5H273.5V420.5H277.5V416.5H281.5V428.5H285.5V412.5H289.5V418.5H293.5V409.5H297.5V428.5H301.5V417.5H305.5V428.5H309.5V417.5H313.5V430.5H317.5V413.5H321.5V416.5H325.5V423.5H329.5V417.5H333.5V421.5H337.5V416.5H341.5V425.5H345.5V416.5H349.5V424.5H353.5V424.5H357.5V411.5H361.5V423.5H365.5V418.5H369.5V422.5H373.5V422.5H377.5V414.5H381.5V419.5H385.5V421.5H389.5V412.5H393.5V418.5H397.5V416.5H401.5V420.5H405.5V420.5H409.5V417.5H413.5V424.5H417.5V422.5H421.5V421.5H425.5V415.5H429.5V420.5H433.5V416.5H437.5V416.5H441.5V427.5H445.5V412.5H449.5V413.5H453.5V425.5H457.5V423.5H461.5V421.5H465.5V429.5H469.5V416.5H473.5V429.5H477.5V416.5H481.5V424.5H485.5V414.5H489.5V418.5H493.5V418.5H497.5V424.5H501.5V413.5H505.5V420.5H509.5V421.5H513.5V426.5H517.5V412.5H521.5V415.5H525.5V421.5H529.5V423.5H533.5V424.5H537.5V413.5H541.5V407.5H545.5V413.5H549.5V418.5H553.5V410.5H557.5V408.5H561.5V423.5H565.5V410.5H569.5V409.5H573.5V424.5H577.5V419.5H581.5V427.5H585.5V391.5H589.5V413.5H593.5V423.5H597.5V423.5H601.5V425.5H605.5V410.5H609.5V420.5H613.5V418.5H617.5V422.5H621.5V414.5H625.5V425.5H629.5V409.5H633.5V420.5H637.5V417.5H641.5V428.5H645.5V417.5H649.5V416.5H653.5V411.5H657.5V424.5H661.5V331.5H665.5V410.5H669.5V415.5H673.5V392.5H677.5V420.5H681.5V396.5H685.5V418.5H689.5V410.5H693.5V411.5H697.5V394.5H701.5V420.5H705.5V410.5H709.5V421.5H713.5V417.5H717.5V390.5H721.5V407.5H725.5V426.5H729.5V420.5H733.5V421.5H737.5V419.5H741.5V413.5H745.5V408.5H749.5V378.5H753.5V416.5H757.5V425.5H761.5V418.5H765.5V410.5H769.5V404.5H773.5V426.5H777.5V413.5H781.5V423.5H785.5V400.5H789.5V413.5H793.5V410.5H797.5V395.5H801.5V411.5H805.5V424.5H809.5V412.5H813.5V424.5H817.5V411.5H821.5V393.5H825.5V408.5H829.5V407.5H833.5V426.5H837.5V415.5H841.5V412.5H845.5V422.5H849.5V382.5H853.5V417.5H857.5V413.5H861.5V437.5H865.5V417.5H869.5V412.5H873.5V418.5H877.5V422.5H881.5V415.5H885.5V426.5H889.5V414.5H893.5V421.5H897.5V421.5H901.5V416.5H905.5V424.5H909.5V423.5H913.5V407.5H917.5V421.5H921.5V413.5H925.5V417.5H929.5V419.5H933.5V411.5H937.5V414.5H941.5V420.5H945.5V411.5H949.5V421.5H953.5V424.5H957.5V426.5H961.5V400.5H965.5V426.5H969.5V412.5H973.5V422.5H976.5" fill="none" stroke="#f3f9ef" stroke-width="3" stroke-opacity="0.7"/><path d="M21.5,422.5V410.5M25.5,410.5V412.5M29.5,412.5V426.5M33.5,426.5V420.5M37.5,420.5V422.5M41.5,422.5V416.5M45.5,416.5V418.5M49.5,418.5V422.5M53.5,422.5V422.5M57.5,422.5V424.5M61.5,424.5V384.5M65.5,384.5V416.5M69.5,416.5V414.5M73.5,414.5V426.5M77.5,426.5V408.5M81.5,408.5V424.5M85.5,424.5V414.5M89.5,414.5V408.5M93.5,408.5V420.5M97.5,420.5V420.5M101.5,420.5V416.5M105.5,416.5V428.5M109.5,428.5V418.5M113.5,418.5V423.5M117.5,423.5V419.5M121.5,419.5V425.5M125.5,425.5V420.5M129.5,420.5V409.5M133.5,409.5V401.5M137.5,401.5V429.5M141.5,429.5V413.5M145.5,413.5V426.5M149.5,426.5V409.5M153.5,409.5V424.5M157.5,424.5V392.5M161.5,392.5V413.5M165.5,413.5V420.5M169.5,420.5V401.5M173.5,401.5V409.5M177.5,409.5V427.5M181.5,427.5V409.5M185.5,409.5V404.5M189.5,404.5V406.5M193.5,406.5V425.5M197.5,425.5V400.5M201.5,400.5V428.5M205.5,428.5V415.5M209.5,415.5V424.5M213.5,424.5V412.5M217.5,412.5V421.5M221.5,421.5V417.5M225.5,417.5V344.5M229.5,344.5V409.5M233.5,409.5V427.5M237.5,427.5V417.5M241.5,417.5V427.5M245.5,427.5V391.5M249.5,391.5V422.5M253.5,422.5V413.5M257.5,413.5V418.5M261.5,418.5V420.5M265.5,420.5V430.5M269.5,430.5V413.5M273.5,413.5V420.5M277.5,420.5V416.5M281.5,416.5V428.5M285.5,428.5V412.5M289.5,412.5V418.5M293.5,418.5V409.5M297.5,409.5V428.5M301.5,428.5V417.5M305.5,417.5V428.5M309.5,428.5V417.5M313.5,417.5V430.5M317.5,430.5V413.5M321.5,413.5V416.5M325.5,416.5V423.5M329.5,423.5V417.5M333.5,417.5V421.5M337.5,421.5V416.5M341.5,416.5V425.5M345.5,425.5V416.5M349.5,416.5V424.5M353.5,424.5V424.5M357.5,424.5V411.5M361.5,411.5V423.5M365.5,423.5V418.5M369.5,418.5V422.5M373.5,422.5V422.5M377.5,422.5V414.5M381.5,414.5V419.5M385.5,419.5V421.5M389.5,421.5V412.5M393.5,412.5V418.5M397.5,418.5V416.5M401.5,416.5V420.5M405.5,420.5V420.5M409.5,420.5V417.5M413.5,417.5V424.5M417.5,424.5V422.5M421.5,422.5V421.5M425.5,421.5V415.5M429.5,415.5V420.5M433.5,420.5V416.5M437.5,416.5V416.5M441.5,416.5V427.5M445.5,427.5V412.5M449.5,412.5V413.5M453.5,413.5V425.5M457.5,425.5V423.5M461.5,423.5V421.5M465.5,421.5V429.5M469.5,429.5V416.5M473.5,416.5V429.5M477.5,429.5V416.5M481.5,416.5V424.5M485.5,424.5V414.5M489.5,414.5V418.5M493.5,418.5V418.5M497.5,418.5V424.5M501.5,424.5V413.5M505.5,413.5V420.5M509.5,420.5V421.5M513.5,421.5V426.5M517.5,426.5V412.5M521.5,412.5V415.5M525.5,415.5V421.5M529.5,421.5V423.5M533.5,423.5V424.5M537.5,424.5V413.5M541.5,413.5V407.5M545.5,407.5V413.5M549.5,413.5V418.5M553.5,418.5V410.5M557.5,410.5V408.5M561.5,408.5V423.5M565.5,423.5V410.5M569.5,410.5V409.5M573.5,409.5V424.5M577.5,424.5V419.5M581.5,419.5V427.5M585.5,427.5V391.5M589.5,391.5V413.5M593.5,413.5V423.5M597.5,423.5V423.5M601.5,423.5V425.5M605.5,425.5V410.5M609.5,410.5V420.5M613.5,420.5V418.5M617.5,418.5V422.5M621.5,422.5V414.5M625.5,414.5V425.5M629.5,425.5V409.5M633.5,409.5V420.5M637.5,420.5V417.5M641.5,417.5V428.5M645.5,428.5V417.5M649.5,417.5V416.5M653.5,416.5V411.5M657.5,411.5V424.5M661.5,424.5V331.5M665.5,331.5V410.5M669.5,410.5V415.5M673.5,415.5V392.5M677.5,392.5V420.5M681.5,420.5V396.5M685.5,396.5V418.5M689.5,418.5V410.5M693.5,410.5V411.5M697.5,411.5V394.5M701.5,394.5V420.5M705.5,420.5V410.5M709.5,410.5V421.5M713.5,421.5V417.5M717.5,417.5V390.5M721.5,390.5V407.5M725.5,407.5V426.5M729.5,426.5V420.5M733.5,420.5V421.5M737.5,421.5V419.5M741.5,419.5V413.5M745.5,413.5V408.5M749.5,408.5V378.5M753.5,378.5V416.5M757.5,416.5V425.5M761.5,425.5V418.5M765.5,418.5V410.5M769.5,410.5V404.5M773.5,404.5V426.5M777.5,426.5V413.5M781.5,413.5V423.5M785.5,423.5V400.5M789.5,400.5V413.5M793.5,413.5V410.5M797.5,410.5V395.5M801.5,395.5V411.5M805.5,411.5V424.5M809.5,424.5V412.5M813.5,412.5V424.5M817.5,424.5V411.5M821.5,411.5V393.5M825.5,393.5V408.5M829.5,408.5V407.5M833.5,407.5V426.5M837.5,426.5V415.5M841.5,415.5V412.5M845.5,412.5V422.5M849.5,422.5V382.5M853.5,382.5V417.5M857.5,417.5V413.5M861.5,413.5V437.5M865.5,437.5V417.5M869.5,417.5V412.5M873.5,412.5V418.5M877.5,418.5V422.5M881.5,422.5V415.5M885.5,415.5V426.5M889.5,426.5V414.5M893.5,414.5V421.5M897.5,421.5V421.5M901.5,421.5V416.5M905.5,416.5V424.5M909.5,424.5V423.5M913.5,423.5V407.5M917.5,407.5V421.5M921.5,421.5V413.5M925.5,413.5V417.5M929.5,417.5V419.5M933.5,419.5V411.5M937.5,411.5V414.5M941.5,414.5V420.5M945.5,420.5V411.5M949.5,411.5V421.5M953.5,421.5V424.5M957.5,424.5V426.5M961.5,426.5V400.5M965.5,400.5V426.5M969.5,426.5V412.5M973.5,412.5V422.5" fill="none" stroke="#2a2a2a" stroke-width="1.2"/><path d="M17.5,422.5H22.1M20.9,410.5H26.1M24.9,412.5H30.1M28.9,426.5H34.1M32.9,420.5H38.1M36.9,422.5H42.1M40.9,416.5H46.1M44.9,418.5H50.1M48.9,422.5H54.1M52.9,422.5H58.1M56.9,424.5H62.1M60.9,384.5H66.1M64.9,416.5H70.1M68.9,414.5H74.1M72.9,426.5H78.1M76.9,408.5H82.1M80.9,424.5H86.1M84.9,414.5H90.1M88.9,408.5H94.1M92.9,420.5H98.1M96.9,420.5H102.1M100.9,416.5H106.1M104.9,428.5H110.1M108.9,418.5H114.1M112.9,423.5H118.1M116.9,419.5H122.1M120.9,425.5H126.1M124.9,420.5H130.1M128.9,409.5H134.1M132.9,401.5H138.1M136.9,429.5H142.1M140.9,413.5H146.1M144.9,426.5H150.1M148.9,409.5H154.1M152.9,424.5H158.1M156.9,392.5H162.1M160.9,413.5H166.1M164.9,420.5H170.1M168.9,401.5H174.1M172.9,409.5H178.1M176.9,427.5H182.1M180.9,409.5H186.1M184.9,404.5H190.1M188.9,406.5H194.1M192.9,425.5H198.1M196.9,400.5H202.1M200.9,428.5H206.1M204.9,415.5H210.1M208.9,424.5H214.1M212.9,412.5H218.1M216.9,421.5H222.1M220.9,417.5H226.1M224.9,344.5H230.1M228.9,409.5H234.1M232.9,427.5H238.1M236.9,417.5H242.1M240.9,427.5H246.1M244.9,391.5H250.1M248.9,422.5H254.1M252.9,413.5H258.1M256.9,418.5H262.1M260.9,420.5H266.1M264.9,430.5H270.1M268.9,413.5H274.1M272.9,420.5H278.1M276.9,416.5H282.1M280.9,428.5H286.1M284.9,412.5H290.1M288.9,418.5H294.1M292.9,409.5H298.1M296.9,428.5H302.1M300.9,417.5H306.1M304.9,428.5H310.1M308.9,417.5H314.1M312.9,430.5H318.1M316.9,413.5H322.1M320.9,416.5H326.1M324.9,423.5H330.1M328.9,417.5H334.1M332.9,421.5H338.1M336.9,416.5H342.1M340.9,425.5H346.1M344.9,416.5H350.1M348.9,424.5H354.1M352.9,424.5H358.1M356.9,411.5H362.1M360.9,423.5H366.1M364.9,418.5H370.1M368.9,422.5H374.1M372.9,422.5H378.1M376.9,414.5H382.1M380.9,419.5H386.1M384.9,421.5H390.1M388.9,412.5H394.1M392.9,418.5H398.1M396.9,416.5H402.1M400.9,420.5H406.1M404.9,420.5H410.1M408.9,417.5H414.1M412.9,424.5H418.1M416.9,422.5H422.1M420.9,421.5H426.1M424.9,415.5H430.1M428.9,420.5H434.1M432.9,416.5H438.1M436.9,416.5H442.1M440.9,427.5H446.1M444.9,412.5H450.1M448.9,413.5H454.1M452.9,425.5H458.1M456.9,423.5H462.1M460.9,421.5H466.1M464.9,429.5H470.1M468.9,416.5H474.1M472.9,429.5H478.1M476.9,416.5H482.1M480.9,424.5H486.1M484.9,414.5H490.1M488.9,418.5H494.1M492.9,418.5H498.1M496.9,424.5H502.1M500.9,413.5H506.1M504.9,420.5H510.1M508.9,421.5H514.1M512.9,426.5H518.1M516.9,412.5H522.1M520.9,415.5H526.1M524.9,421.5H530.1M528.9,423.5H534.1M532.9,424.5H538.1M536.9,413.5H542.1M540.9,407.5H546.1M544.9,413.5H550.1M548.9,418.5H554.1M552.9,410.5H558.1M556.9,408.5H562.1M560.9,423.5H566.1M564.9,410.5H570.1M568.9,409.5H574.1M572.9,424.5H578.1M576.9,419.5H582.1M580.9,427.5H586.1M584.9,391.5H590.1M588.9,413.5H594.1M592.9,423.5H598.1M596.9,423.5H602.1M600.9,425.5H606.1M604.9,410.5H610.1M608.9,420.5H614.1M612.9,418.5H618.1M616.9,422.5H622.1M620.9,414.5H626.1M624.9,425.5H630.1M628.9,409.5H634.1M632.9,420.5H638.1M636.9,417.5H642.1M640.9,428.5H646.1M644.9,417.5H650.1M648.9,416.5H654.1M652.9,411.5H658.1M656.9,424.5H662.1M660.9,331.5H666.1M664.9,410.5H670.1M668.9,415.5H674.1M672.9,392.5H678.1M676.9,420.5H682.1M680.9,396.5H686.1M684.9,418.5H690.1M688.9,410.5H694.1M692.9,411.5H698.1M696.9,394.5H702.1M700.9,420.5H706.1M704.9,410.5H710.1M708.9,421.5H714.1M712.9,417.5H718.1M716.9,390.5H722.1M720.9,407.5H726.1M724.9,426.5H730.1M728.9,420.5H734.1M732.9,421.5H738.1M736.9,419.5H742.1M740.9,413.5H746.1M744.9,408.5H750.1M748.9,378.5H754.1M752.9,416.5H758.1M756.9,425.5H762.1M760.9,418.5H766.1M764.9,410.5H770.1M768.9,404.5H774.1M772.9,426.5H778.1M776.9,413.5H782.1M780.9,423.5H786.1M784.9,400.5H790.1M788.9,413.5H794.1M792.9,410.5H798.1M796.9,395.5H802.1M800.9,411.5H806.1M804.9,424.5H810.1M808.9,412.5H814.1M812.9,424.5H818.1M816.9,411.5H822.1M820.9,393.5H826.1M824.9,408.5H830.1M828.9,407.5H834.1M832.9,426.5H838.1M836.9,415.5H842.1M840.9,412.5H846.1M844.9,422.5H850.1M848.9,382.5H854.1M852.9,417.5H858.1M856.9,413.5H862.1M860.9,437.5H866.1M864.9,417.5H870.1M868.9,412.5H874.1M872.9,418.5H878.1M876.9,422.5H882.1M880.9,415.5H886.1M884.9,426.5H890.1M888.9,414.5H894.1M892.9,421.5H898.1M896.9,421.5H902.1M900.9,416.5H906.1M904.9,424.5H910.1M908.9,423.5H914.1M912.9,407.5H918.1M916.9,421.5H922.1M920.9,413.5H926.1M924.9,417.5H930.1M928.9,419.5H934.1M932.9,411.5H938.1M936.9,414.5H942.1M940.9,420.5H946.1M944.9,411.5H950.1M948.9,421.5H954.1M952.9,424.5H958.1M956.9,426.5H962.1M960.9,400.5H966.1M964.9,426.5H970.1M968.9,412.5H974.1M972.9,422.5H976.5" fill="none" stroke="#222" stroke-width="1.55"/></svg>
</body></html>
